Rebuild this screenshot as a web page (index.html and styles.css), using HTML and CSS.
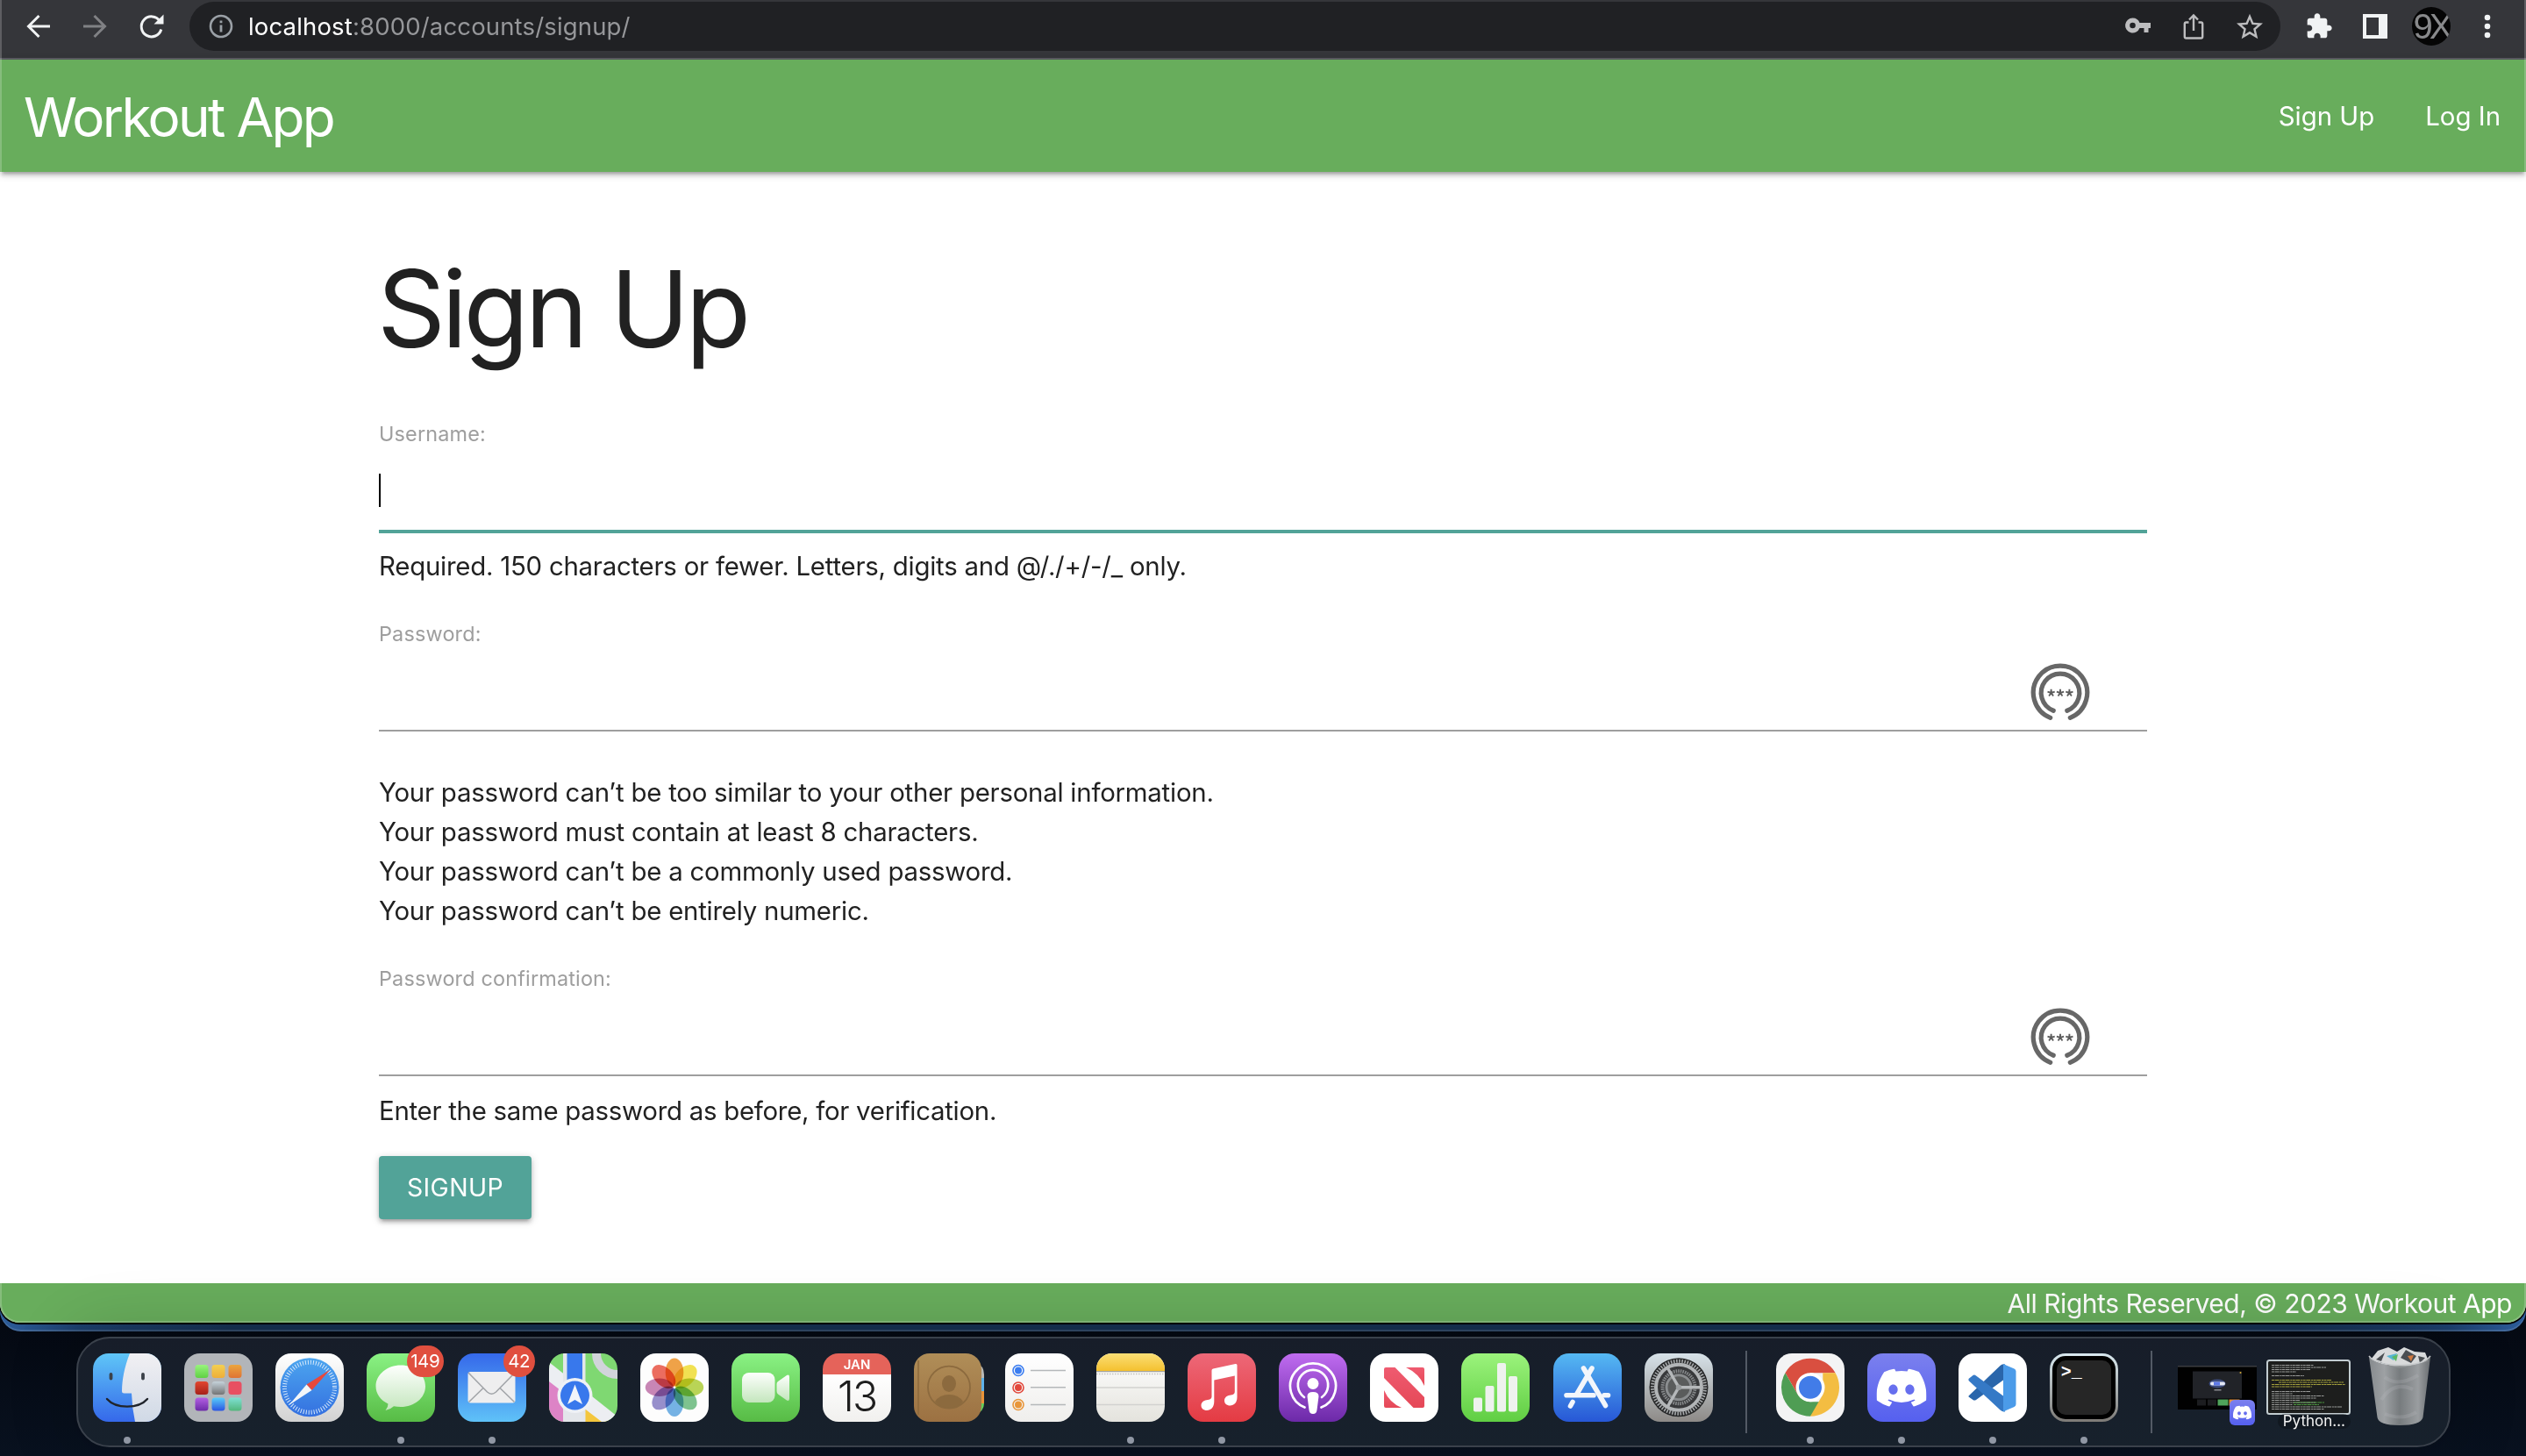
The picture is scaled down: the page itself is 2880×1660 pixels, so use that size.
FILE: index.html
```html
<!DOCTYPE html>
<html lang="en">
<head>
<meta charset="utf-8">
<title>Workout App</title>
<link rel="stylesheet" href="styles.css">
</head>
<body>
<svg class="defs" width="0" height="0">
  <defs>
    <linearGradient id="g-finder" x2="0" y2="1"><stop offset="0" stop-color="#5fc6f7"/><stop offset="1" stop-color="#3568ea"/></linearGradient>
    <linearGradient id="g-face" x2="0" y2="1"><stop offset="0" stop-color="#f1f0f3"/><stop offset="1" stop-color="#d0d9e6"/></linearGradient>
    <linearGradient id="g-silver" x2="0" y2="1"><stop offset="0" stop-color="#fff"/><stop offset="1" stop-color="#d2d2d2"/></linearGradient>
    <linearGradient id="g-safari" x2="0" y2="1"><stop offset="0" stop-color="#4ca5ef"/><stop offset="1" stop-color="#3470e0"/></linearGradient>
    <linearGradient id="g-green" x2="0" y2="1"><stop offset="0" stop-color="#8af284"/><stop offset="1" stop-color="#57bb45"/></linearGradient>
    <linearGradient id="g-bubble" x2="0" y2="1"><stop offset="0" stop-color="#fdfffd"/><stop offset="1" stop-color="#c4e6bd"/></linearGradient>
    <linearGradient id="g-mail" x2="0" y2="1"><stop offset="0" stop-color="#3568ea"/><stop offset="1" stop-color="#5fc2f8"/></linearGradient>
    <linearGradient id="g-brown" x2="0" y2="1"><stop offset="0" stop-color="#b08e58"/><stop offset="1" stop-color="#9c7142"/></linearGradient>
    <linearGradient id="g-paper" x2="0" y2="1"><stop offset="0" stop-color="#fff"/><stop offset="1" stop-color="#efeeec"/></linearGradient>
    <linearGradient id="g-note" x2="0" y2="1"><stop offset="0" stop-color="#fff"/><stop offset="1" stop-color="#e4e3dd"/></linearGradient>
    <linearGradient id="g-yellow" x2="0" y2="1"><stop offset="0" stop-color="#fbdf76"/><stop offset="1" stop-color="#f4c12f"/></linearGradient>
    <linearGradient id="g-music" x2="0" y2="1"><stop offset="0" stop-color="#ed6878"/><stop offset="1" stop-color="#e43b43"/></linearGradient>
    <linearGradient id="g-pod" x2="0" y2="1"><stop offset="0" stop-color="#c06cf0"/><stop offset="1" stop-color="#6c29a8"/></linearGradient>
    <linearGradient id="g-news" x2="0" y2="1"><stop offset="0" stop-color="#ef5b70"/><stop offset="1" stop-color="#e54857"/></linearGradient>
    <linearGradient id="g-numbers" x2="0" y2="1"><stop offset="0" stop-color="#9bf37c"/><stop offset="1" stop-color="#60ce43"/></linearGradient>
    <linearGradient id="g-store" x2="0" y2="1"><stop offset="0" stop-color="#55b9f3"/><stop offset="1" stop-color="#2757d6"/></linearGradient>
    <linearGradient id="g-gear" x2="0" y2="1"><stop offset="0" stop-color="#d7e2e9"/><stop offset="1" stop-color="#8d8a87"/></linearGradient>
    <linearGradient id="g-discord" x2="0" y2="1"><stop offset="0" stop-color="#7b80ee"/><stop offset="1" stop-color="#5560ef"/></linearGradient>
    <linearGradient id="g-lp1" x2="0" y2="1"><stop offset="0" stop-color="#98f57d"/><stop offset="1" stop-color="#5fd044"/></linearGradient>
    <linearGradient id="g-lp2" x2="0" y2="1"><stop offset="0" stop-color="#f3cf50"/><stop offset="1" stop-color="#eeae3a"/></linearGradient>
    <linearGradient id="g-lp3" x2="0" y2="1"><stop offset="0" stop-color="#eba53e"/><stop offset="1" stop-color="#df7334"/></linearGradient>
    <linearGradient id="g-lp4" x2="0" y2="1"><stop offset="0" stop-color="#e2462f"/><stop offset="1" stop-color="#a6221a"/></linearGradient>
    <linearGradient id="g-lp5" x2="0" y2="1"><stop offset="0" stop-color="#c5d2da"/><stop offset="1" stop-color="#737475"/></linearGradient>
    <linearGradient id="g-lp7" x2="0" y2="1"><stop offset="0" stop-color="#b35fe3"/><stop offset="1" stop-color="#6c2ba8"/></linearGradient>
    <linearGradient id="g-lp8" x2="0" y2="1"><stop offset="0" stop-color="#58cdfa"/><stop offset="1" stop-color="#2b55e2"/></linearGradient>
    <linearGradient id="g-lp9" x2="0" y2="1"><stop offset="0" stop-color="#7fe0d3"/><stop offset="1" stop-color="#52b67c"/></linearGradient>
    <linearGradient id="g-trash" x2="1" y2="0"><stop offset="0" stop-color="#8f9396"/><stop offset=".25" stop-color="#a9acae"/><stop offset=".5" stop-color="#7f8385"/><stop offset=".8" stop-color="#a5a8aa"/><stop offset="1" stop-color="#6f7376"/></linearGradient>
    <clipPath id="tile"><rect width="78" height="78" rx="18"/></clipPath>
    <symbol id="discord" viewBox="0 0 127.140 96.360"><path fill="#fff" d="M107.700,8.070A105.150,105.150,0,0,0,81.470,0a72.060,72.060,0,0,0-3.360,6.830A97.680,97.680,0,0,0,49,6.830,72.370,72.370,0,0,0,45.640,0,105.890,105.890,0,0,0,19.390,8.090C2.790,32.650-1.710,56.600.54,80.210h0A105.730,105.730,0,0,0,32.710,96.360,77.700,77.700,0,0,0,39.600,85.250a68.420,68.420,0,0,1-10.850-5.180c.91-.66,1.800-1.340,2.660-2a75.570,75.570,0,0,0,64.320,0c.87.71,1.760,1.390,2.660,2a68.680,68.680,0,0,1-10.870,5.190,77,77,0,0,0,6.890,11.100A105.250,105.250,0,0,0,126.600,80.220h0C129.240,52.840,122.090,29.110,107.700,8.070ZM42.450,65.690C36.180,65.690,31,60,31,53s5-12.740,11.430-12.740S54,46,53.890,53,48.840,65.690,42.450,65.690Zm42.240,0C78.410,65.690,73.250,60,73.250,53s5-12.740,11.440-12.740S96.230,46,96.120,53,91.080,65.690,84.690,65.690Z"/></symbol>
    <symbol id="pwkey" viewBox="-35 -35 70 70"><g fill="none" stroke="#676767" stroke-width="5.200" stroke-linecap="round"><path d="M-11.300 28.300A30.700 30.700 0 1 1 11.300 28.300"/><path d="M-7.800 20.200A21.800 21.800 0 1 1 7.800 20.200"/></g><g stroke="#5c5c5c" stroke-width="1.900"><path id="star" d="M0 0V-4.300M0 0L4.100-1.300M0 0L2.500 3.500M0 0L-2.500 3.500M0 0L-4.100-1.300"/><use href="#star" x="-10.400"/><use href="#star" x="10.400"/></g></symbol>
  </defs>
</svg>
<div class="desktop">
  <div class="window-back">
  <div class="window">
    <div class="toolbar">
      <div class="nav-icons">
        <svg width="28" height="28" viewBox="0 0 28 28"><path d="M27 14H3M14.500 2L2.500 14L14.500 26"/></svg>
        <svg class="disabled" width="28" height="28" viewBox="0 0 28 28"><path d="M1 14H25M13.500 2L25.500 14L13.500 26"/></svg>
        <svg width="30" height="30" viewBox="0 0 30 30"><path d="M24.300 9A11.500 11.500 0 1 0 25.800 18.500"/><path class="tip" d="M28.500 1.500V12.500H17.500Z"/></svg>
      </div>
      <div class="omnibox">
        <svg width="28" height="28" viewBox="0 0 28 28"><circle cx="14" cy="14" r="12" fill="none" stroke="#9aa0a6" stroke-width="2.600"/><path d="M14 12.500V20.500M14 7.500V10.200" stroke="#9aa0a6" stroke-width="2.800"/></svg>
        <div class="url"><span class="host">localhost</span>:8000/accounts/signup/</div>
        <div class="omni-actions">
          <svg width="30" height="30" viewBox="0 0 30 30"><path fill="#bdbdbf" fill-rule="evenodd" d="M9.500 5.500a8.500 8.500 0 0 1 8 5.500H30v6h-2.500v5h-5v-5h-5a8.500 8.500 0 1 1-8-11.500zm0 5.200a3.300 3.300 0 1 0 0 6.600a3.300 3.300 0 0 0 0-6.600z"/></svg>
          <svg width="30" height="30" viewBox="0 0 30 30"><path fill="none" stroke="#bdbdbf" stroke-width="2.400" d="M9.500 10.500H6.500Q4.800 10.500 4.800 12.200V26.800Q4.800 28.500 6.500 28.500H23.500Q25.200 28.500 25.200 26.800V12.200Q25.200 10.500 23.500 10.500H20.500M15 20V2.500M10 7.500L15 2.500L20 7.500"/></svg>
          <svg width="30" height="30" viewBox="0 0 24 24"><path fill="#bdbdbf" d="M22 9.240l-7.190-.62L12 2 9.190 8.630 2 9.240l5.460 4.730L5.820 21 12 17.270 18.180 21l-1.630-7.030L22 9.240zM12 15.400l-3.760 2.270 1-4.280-3.320-2.880 4.380-.38L12 6.100l1.710 4.040 4.380.38-3.320 2.880 1 4.280L12 15.400z" transform="translate(-2.400 -1.800) scale(1.200)"/></svg>
        </div>
      </div>
      <div class="ext-icons">
        <svg width="32" height="32" viewBox="0 0 24 24"><path fill="#f1f3f4" d="M20.500 11H19V7c0-1.100-.9-2-2-2h-4V3.500C13 2.120 11.880 1 10.500 1S8 2.120 8 3.500V5H4c-1.100 0-1.990.9-1.990 2v3.800H3.500c1.490 0 2.700 1.210 2.700 2.700s-1.210 2.700-2.700 2.700H2V20c0 1.100.9 2 2 2h3.800v-1.500c0-1.490 1.210-2.700 2.700-2.700 1.490 0 2.700 1.210 2.700 2.700V22H17c1.100 0 2-.9 2-2v-4h1.500c1.380 0 2.500-1.120 2.500-2.500S21.880 11 20.500 11z"/></svg>
        <svg width="28" height="28" viewBox="0 0 28 28"><path fill="#f1f3f4" fill-rule="evenodd" d="M0 0H28V28H0ZM4 4V24H18V4Z"/></svg>
        <div class="avatar">9X</div>
        <svg width="8" height="28" viewBox="0 0 8 28"><g fill="#f1f3f4"><circle cx="4" cy="4" r="3.300"/><circle cx="4" cy="14" r="3.300"/><circle cx="4" cy="24" r="3.300"/></g></svg>
      </div>
    </div>

    <header class="app-header">
      <div class="brand">Workout App</div>
      <nav class="links"><span>Sign Up</span><span>Log In</span></nav>
    </header>

    <main class="content">
      <h1>Sign Up</h1>
      <label>Username:</label>
      <div class="field focused"><i class="caret"></i></div>
      <p class="help">Required. 150 characters or fewer. Letters, digits and @/./+/-/_ only.</p>
      <label>Password:</label>
      <div class="field"><svg width="70" height="70"><use href="#pwkey"/></svg></div>
      <ul class="rules">
        <li>Your password can’t be too similar to your other personal information.</li>
        <li>Your password must contain at least 8 characters.</li>
        <li>Your password can’t be a commonly used password.</li>
        <li>Your password can’t be entirely numeric.</li>
      </ul>
      <label>Password confirmation:</label>
      <div class="field"><svg width="70" height="70"><use href="#pwkey"/></svg></div>
      <p class="help last">Enter the same password as before, for verification.</p>
      <button class="submit">SIGNUP</button>
    </main>

    <footer class="app-footer">All Rights Reserved, © 2023 Workout App</footer>
  </div>
  </div>

  <div class="dock">
    <div class="app running"><svg viewBox="0 0 78 78"><g clip-path="url(#tile)"><rect width="78" height="78" fill="url(#g-finder)"/><path fill="url(#g-face)" d="M42 0C36 15 33 30 33 43Q33 45.500 35.500 45.500H44Q44.500 62 48 78H78V0Z"/></g><path fill="none" stroke="#20242b" stroke-width="2.400" stroke-linecap="round" d="M16 52C26 63.500 52 63.500 62 52"/><path stroke="#3b4149" stroke-width="3.800" stroke-linecap="round" d="M20.500 24V28.500M57 24V28.500"/></svg></div>
    <div class="app"><svg viewBox="0 0 78 78"><rect width="78" height="78" rx="18" fill="#b2b5b9"/><rect x="12.500" y="13" width="15" height="15" rx="3.500" fill="url(#g-lp1)"/><rect x="31.500" y="13" width="15" height="15" rx="3.500" fill="url(#g-lp2)"/><rect x="50.500" y="13" width="15" height="15" rx="3.500" fill="url(#g-lp3)"/><rect x="12.500" y="32" width="15" height="15" rx="3.500" fill="url(#g-lp4)"/><rect x="31.500" y="32" width="15" height="15" rx="3.500" fill="url(#g-lp5)"/><rect x="50.500" y="32" width="15" height="15" rx="3.500" fill="#e84f62"/><rect x="12.500" y="50.500" width="15" height="15" rx="3.500" fill="url(#g-lp7)"/><rect x="31.500" y="50.500" width="15" height="15" rx="3.500" fill="url(#g-lp8)"/><rect x="50.500" y="50.500" width="15" height="15" rx="3.500" fill="url(#g-lp9)"/></svg></div>
    <div class="app"><svg viewBox="0 0 78 78"><rect width="78" height="78" rx="18" fill="url(#g-silver)"/><circle cx="39" cy="38.700" r="33.500" fill="url(#g-safari)"/><circle cx="39" cy="38.700" r="28.500" fill="none" stroke="#d6e8fa" stroke-width="5" stroke-dasharray="1 2"/><path fill="#e8483c" d="M62.500 18.500L35.500 35.500L41.500 42Z"/><path fill="#f3f6f9" d="M15.500 59L35.500 35.500L41.500 42Z"/></svg></div>
    <div class="app running"><svg viewBox="0 0 78 78"><rect width="78" height="78" rx="18" fill="url(#g-green)"/><path fill="url(#g-bubble)" d="M39 13.500C54.500 13.500 67 24 67 37.500S54.500 61 39 61Q34.500 61 31 60.200Q27 64 21.500 65Q24.500 61.500 24.500 57.500C16 53.500 10.500 46 10.500 37.500C10.500 24 23.500 13.500 39 13.500Z"/></svg><span class="badge b3">149</span></div>
    <div class="app running"><svg viewBox="0 0 78 78"><rect width="78" height="78" rx="18" fill="url(#g-mail)"/><rect x="11.500" y="21" width="54" height="35.500" rx="3" fill="#eeeeef"/><path fill="none" stroke="#a2a5a9" stroke-width="1.600" d="M12.500 55.500L29 39.500M64.500 55.500L48 39.500M12 22L33.500 44Q38.500 48.500 43.500 44L65 22"/></svg><span class="badge b2">42</span></div>
    <div class="app"><svg viewBox="0 0 78 78"><g clip-path="url(#tile)"><rect width="78" height="78" fill="#7fd872"/><path fill="#f4c63d" d="M40 60L70 78H40Z"/><path fill="#dd83c6" d="M0 28L20 45V78H0Z"/><path fill="#eceef2" d="M0 10L78 72V90L60 78L0 32Z"/><path fill="#e3e6ea" d="M16 0H41.500V78H16Z"/><path fill="#3878ec" d="M20.500 0H38V40H20.500Z"/><circle cx="78" cy="0" r="24" fill="none" stroke="#d1d4da" stroke-width="10"/></g><circle cx="29.500" cy="48" r="20" fill="#eef1f6"/><circle cx="29.500" cy="48" r="16.500" fill="#3878ec"/><path fill="#f2f5fa" d="M29.500 35.500L38 58L29.500 53L21 58Z"/></svg></div>
    <div class="app"><svg viewBox="0 0 78 78"><rect width="78" height="78" rx="18" fill="#fdfdfd"/><g class="petals"><ellipse cx="39" cy="21.500" rx="10.300" ry="16" fill="#f09b38"/><ellipse cx="39" cy="21.500" rx="10.300" ry="16" fill="#f2e143" transform="rotate(45 39 38.700)"/><ellipse cx="39" cy="21.500" rx="10.300" ry="16" fill="#b5d348" transform="rotate(90 39 38.700)"/><ellipse cx="39" cy="21.500" rx="10.300" ry="16" fill="#74c087" transform="rotate(135 39 38.700)"/><ellipse cx="39" cy="21.500" rx="10.300" ry="16" fill="#6aaee4" transform="rotate(180 39 38.700)"/><ellipse cx="39" cy="21.500" rx="10.300" ry="16" fill="#8f86c9" transform="rotate(225 39 38.700)"/><ellipse cx="39" cy="21.500" rx="10.300" ry="16" fill="#c67db1" transform="rotate(270 39 38.700)"/><ellipse cx="39" cy="21.500" rx="10.300" ry="16" fill="#ec6253" transform="rotate(315 39 38.700)"/></g></svg></div>
    <div class="app"><svg viewBox="0 0 78 78"><rect width="78" height="78" rx="18" fill="url(#g-green)"/><rect x="12" y="22" width="37.500" height="34" rx="8" fill="url(#g-bubble)"/><path fill="url(#g-bubble)" d="M51.500 35Q51.500 33 53 32L63 25Q66 23.500 66 27V51.500Q66 55 63 53.500L53 46.500Q51.500 45 51.500 43Z"/></svg></div>
    <div class="app calendar"><span class="month">JAN</span><span class="day">13</span></div>
    <div class="app"><svg class="wide" viewBox="0 0 80 78"><path fill="#b9b9b6" d="M70 10Q80 14 80 24V28H70Z"/><path fill="#5eb2ea" d="M70 28H80V43H70Z"/><path fill="#e9943a" d="M70 43H80V57H70Z"/><path fill="#65cf5b" d="M70 57H80Q80 66 70 70Z"/><rect width="77" height="78" rx="18" fill="url(#g-brown)"/><path stroke="#8c6a3c" stroke-width="1.500" d="M5 8V70"/><g fill="#8c6a3e"><ellipse cx="40" cy="34.500" rx="8" ry="9.500"/><path d="M24 55Q29 47 40 47T56 55Q50 63 40 63T24 55Z"/></g><circle cx="40" cy="38.700" r="24" fill="none" stroke="#8c6a3e" stroke-width="1.800"/></svg></div>
    <div class="app"><svg viewBox="0 0 78 78"><rect width="78" height="78" rx="18" fill="url(#g-paper)"/><g fill="none" stroke-width="1.600"><circle cx="15" cy="19.500" r="6" stroke="#3b7df0"/><circle cx="15" cy="39" r="6" stroke="#e2483c"/><circle cx="15" cy="58.500" r="6" stroke="#e8963a"/></g><circle cx="15" cy="19.500" r="4" fill="#3b7df0"/><circle cx="15" cy="39" r="4" fill="#e2483c"/><circle cx="15" cy="58.500" r="4" fill="#e8963a"/><path stroke="#b5b8ba" stroke-width="1.500" d="M29 19.500H69M29 38.700H69M29 58.500H69"/></svg></div>
    <div class="app running"><svg viewBox="0 0 78 78"><g clip-path="url(#tile)"><rect width="78" height="78" fill="url(#g-note)"/><rect width="78" height="20" fill="url(#g-yellow)"/><path stroke="#a5a49d" stroke-width="1.200" d="M0 20.600H78"/><path stroke="#c3c3bf" stroke-width="1.500" stroke-dasharray="1.500 1.500" d="M0 23.500H78"/><path stroke="#d2d2d0" stroke-width="1.500" d="M0 39H78M0 58.500H78"/></g></svg></div>
    <div class="app running"><svg viewBox="0 0 78 78"><rect width="78" height="78" rx="18" fill="url(#g-music)"/><path fill="#fff" d="M27.500 19.500Q27.500 18 29 17.600L54.500 12Q56.500 11.600 56.500 13.500V50C56.500 56 53 59.500 48.500 59.500C44.500 59.500 42 57 42 54C42 50.500 44.500 48.500 48 47.800C52 47 53.800 46.500 53.800 43.500V25.500L30.300 30.500V55C30.300 61.500 26.500 65 22 65C18 65 15.500 62.500 15.500 59.500C15.500 56 18 54 21.500 53.300C25.500 52.500 27.500 52 27.500 49Z"/></svg></div>
    <div class="app"><svg viewBox="0 0 78 78"><rect width="78" height="78" rx="18" fill="url(#g-pod)"/><g fill="none" stroke="#fff" stroke-width="2.700" stroke-linecap="round"><path d="M29.500 61.500A26 26 0 1 1 48.500 61.500"/><path d="M29 50A17.200 17.200 0 1 1 49 50"/></g><circle cx="39" cy="34.500" r="6.500" fill="#fff"/><path fill="#fff" d="M32.500 49Q32.500 44 39 44T45.500 49L43.500 64.500Q43 69 39 69T34.500 64.500Z"/></svg></div>
    <div class="app"><svg viewBox="0 0 78 78"><rect width="78" height="78" rx="18" fill="#fff"/><g fill="url(#g-news)"><path d="M16 18Q16 16 18 16H28.500L62 50V60Q62 62 60 62H49.500L16 28Z"/><path d="M41 16H60Q62 16 62 18V37Q56 23 41 16Z"/><path d="M16 42Q22 56 36 62H18Q16 62 16 60Z"/></g></svg></div>
    <div class="app"><svg viewBox="0 0 78 78"><rect width="78" height="78" rx="18" fill="url(#g-numbers)"/><g fill="#eef2ee"><rect x="14" y="50.500" width="10" height="16" rx="2"/><rect x="27.500" y="37" width="10" height="29.500" rx="2"/><rect x="41" y="11" width="10" height="55.500" rx="2"/><rect x="54" y="26" width="10" height="40.500" rx="2"/></g></svg></div>
    <div class="app"><svg viewBox="0 0 78 78"><rect width="78" height="78" rx="18" fill="url(#g-store)"/><g stroke="#f3f6fb" stroke-width="5.600" stroke-linecap="round"><path d="M34.500 17L59.500 59.500"/><path d="M44 17L27 46"/><path d="M15 47.800H46M58 47.800H62.500M22 55.500L19.500 60"/></g></svg></div>
    <div class="app"><svg viewBox="0 0 78 78"><rect width="78" height="78" rx="18" fill="url(#g-gear)"/><circle cx="39" cy="38.700" r="33.500" fill="#262728"/><circle cx="39" cy="38.700" r="30" fill="none" stroke="#a5a8aa" stroke-width="4" stroke-dasharray="1.600 1.540"/><circle cx="39" cy="38.700" r="26" fill="#38393b" stroke="#b2b5b7" stroke-width="4"/><circle cx="39" cy="38.700" r="18.500" fill="none" stroke="#85888a" stroke-width="4" stroke-dasharray="1.600 1"/><circle cx="39" cy="38.700" r="14" fill="#5a5c5c" stroke="#8a8d8f" stroke-width="3"/><g stroke="#b5b8ba" stroke-width="3.400"><path d="M39 38.700H64M39 38.700L26.500 17M39 38.700L26.500 60.400"/></g><circle cx="39" cy="38.700" r="3.200" fill="#9b9ea0"/></svg></div>
    <i class="sep"></i>
    <div class="app running"><svg viewBox="0 0 78 78"><rect width="78" height="78" rx="18" fill="#f3f3f4"/><path fill="#d94f40" d="M10.400 22.200A33 33 0 0 1 67.600 22.200H39L24.700 47Z"/><path fill="#4f9d54" d="M10.400 22.200L24.700 47Q30 55 39 55.200H53.300L39 71.700A33 33 0 0 1 10.400 22.200Z"/><path fill="#f3bd42" d="M67.600 22.200A33 33 0 0 1 39 71.700L53.300 47V22.200Z"/><circle cx="39" cy="38.700" r="16.500" fill="#fff"/><circle cx="39" cy="38.700" r="13" fill="#427ce8"/></svg></div>
    <div class="app running"><svg viewBox="0 0 78 78"><rect width="78" height="78" rx="18" fill="url(#g-discord)"/><use href="#discord" x="10.500" y="17.500" width="57" height="43.200"/></svg></div>
    <div class="app running"><svg viewBox="0 0 78 78"><rect width="78" height="78" rx="18" fill="#fff"/><path fill="#2a66ab" d="M11.500 48.500L47.500 14Q50 11.500 53 12.500V29L20 53Q18 54 16.500 53L11.500 49.500Z"/><path fill="#3579c6" d="M11.500 29L16.500 25Q18 24 20 25.500L53 50V66.500Q50 67 47.500 64.500L11.500 31Z"/><path fill="#4b9be9" d="M51 12L63.500 17.500Q65.500 18.500 65.500 20.500V58Q65.500 60 63.500 61L51 66.500Z"/></svg></div>
    <div class="app terminal running"><div class="screen">&gt;_</div></div>
    <i class="sep second"></i>
    <div class="thumb video">
      <svg width="90" height="50" viewBox="0 0 90 50"><rect width="90" height="50" fill="#010101"/><rect width="90" height="1.500" fill="#3b3c40"/><rect x="17" y="6.500" width="56" height="31" fill="#212328"/><ellipse cx="45" cy="20.500" rx="9.500" ry="5" fill="#3b4a7c"/><rect x="37" y="18.500" width="17" height="4" rx="2" fill="#e2e6f4"/><rect x="41" y="18.500" width="7" height="4" fill="#5d78e8"/><rect x="41.500" y="27" width="8" height="1.500" fill="#8b8c90"/><rect x="22" y="38.500" width="10" height="7" fill="#1c1d20"/><rect x="34" y="38.500" width="10" height="7" fill="#1c1d20"/><rect x="45.500" y="38.500" width="12" height="7" fill="#4fa35b"/><rect x="58.500" y="38.500" width="12" height="7" fill="#e8953a"/><circle cx="71.500" cy="8" r="1" fill="#d3a531"/></svg>
      <svg class="mini" width="29" height="29" viewBox="0 0 78 78"><rect width="78" height="78" rx="16" fill="url(#g-discord)"/><use href="#discord" x="10.500" y="17.500" width="57" height="43.200"/></svg>
    </div>
    <div class="thumb console">
      <svg width="96" height="63" viewBox="0 0 96 63"><rect x="1" y="1" width="94" height="61" rx="2.500" fill="#1d1e1d" stroke="#c2ccd0" stroke-width="2"/><g fill="none" stroke-width="1.200" stroke-dasharray="3 .6 5 .8 2 .5"><path stroke="#9a9b9a" d="M6 6.500H54M6 9H68M6 11.500H50M6 14H34M6 18.500H43M6 36.500H50M6 39H30M6 41.500H66M6 44H57M6 46.500H38M6 49H56M6 51.500H30M6 54H86M6 56.500H66"/><path stroke="#a5a13c" d="M6 23.500H74M14 26H88M6 28.500H90M6 31H52"/><path stroke="#4f9c43" d="M31 49H66M31 51.500H60"/></g></svg>
      <span class="caption">Python…</span>
    </div>
    <svg class="trash" width="74" height="92" viewBox="0 0 74 92"><path fill="#d8dadb" d="M4 16L12 6L24 2L34 7L42 2L54 7L66 8L70 18L37 26Z"/><path fill="#4a4e52" d="M10 16L20 8L16 18ZM38 14L44 5L56 12L50 20ZM58 12L66 14L60 20Z"/><path fill="#56b5d2" d="M22 12L34 9L30 17Z"/><path fill="#5cb864" d="M28 13L35 10L33 18Z"/><path fill="#cf7940" d="M46 12L53 11L50 18Z"/><path fill="url(#g-trash)" fill-opacity=".92" d="M2 13Q10 23 37 23T72 13L63.500 82Q61 91 37 91T11.500 82Z"/><path fill="none" stroke="#c6c9cb" stroke-width="1.500" d="M2 12Q10 22.500 37 22.500T72 12"/><path fill="none" stroke="#c2c5c6" stroke-opacity=".2" stroke-width="4" d="M20 36Q34 48 58 34M16 62Q30 40 52 50M20 78Q40 86 56 76"/></svg>
  </div>
</div>
</body>
</html>
```
FILE: styles.css
```css
* {
  box-sizing: border-box;
  margin: 0;
  padding: 0;
}

body {
  width: 2880px;
  height: 1660px;
  overflow: hidden;
  font-family: Inter, "Liberation Sans", sans-serif;
  color: #212121;
  background: #060c18;
}

svg {
  display: block;
  flex: none;
}

.defs {
  position: absolute;
}

.desktop {
  display: flex;
  flex-direction: column;
  height: 1660px;
  background: linear-gradient(#040811 1500px, #08111f 1660px);
}

/* browser window, with the edge of another window behind it */
.window-back {
  flex: none;
  height: 1518px;
  border-radius: 0 0 24px 24px;
  background: linear-gradient(90deg, #2d5d9b, #1c3f6c 90px, #163152 260px, #163152 2620px, #1c3f6c 2790px, #2d5d9b);
  box-shadow: inset 0 -2px 0 rgba(255, 255, 255, .12);
}

.window {
  position: relative;
  display: flex;
  flex-direction: column;
  height: 1508px;
  border-radius: 0 0 22px 22px;
  overflow: hidden;
  background: #fff;
  box-shadow: 0 1px 0 1px #000;
}

.window::after {
  content: "";
  position: absolute;
  inset: 0;
  border: 2px solid rgba(255, 255, 255, .2);
  border-top: 0;
  border-radius: 0 0 22px 22px;
}

.toolbar {
  display: flex;
  flex: none;
  height: 68px;
  padding: 2px 0 8px 30px;
  background: #35363a;
  border-bottom: 2px solid #5d5e64;
}

.nav-icons {
  display: flex;
  flex: none;
  align-items: center;
  gap: 36px;
  width: 186px;
}

.nav-icons path {
  fill: none;
  stroke: #f1f3f4;
  stroke-width: 3;
}

.nav-icons .disabled path {
  stroke: #808184;
}

.nav-icons .tip {
  fill: #f1f3f4;
  stroke: none;
}

.omnibox {
  display: flex;
  align-items: center;
  flex: none;
  width: 2384px;
  height: 56px;
  padding: 0 20px 0 22px;
  border-radius: 28px;
  background: #202124;
}

.url {
  flex: 1;
  margin-left: 17px;
  font-size: 27.5px;
  letter-spacing: .16px;
  color: #96979a;
}

.host {
  color: #fff;
}

.omni-actions {
  display: flex;
  gap: 34px;
}

.ext-icons {
  display: flex;
  flex: none;
  align-items: center;
  margin-left: 28px;
}

.avatar {
  width: 44px;
  height: 44px;
  margin: 0 38px 0 28px;
  border-radius: 50%;
  overflow: hidden;
  background: #050505;
  color: #88898b;
  font: 40px/44px "Liberation Sans", sans-serif;
  letter-spacing: -4px;
  text-align: center;
}

.ext-icons svg:nth-child(2) {
  margin-left: 34px;
}

.app-header {
  position: relative;
  display: flex;
  flex: none;
  justify-content: space-between;
  align-items: center;
  height: 128px;
  padding: 2px 29px 0 27px;
  color: #fff;
  background: #68ad5c;
  box-shadow: 0 4px 4px rgba(0, 0, 0, .14), 0 6px 2px -4px rgba(0, 0, 0, .12), 0 2px 10px rgba(0, 0, 0, .2);
}

.brand {
  font-size: 62px;
  letter-spacing: -2.65px;
}

.links {
  display: flex;
  gap: 58px;
  padding-bottom: 2px;
  font-size: 29.4px;
}

.content {
  flex: none;
  height: 1267px;
  padding: 86px 432px 0;
}

h1 {
  margin: 0 0 55px -2px;
  font-size: 121.5px;
  font-weight: 400;
  line-height: 140px;
  letter-spacing: -4.4px;
}

label {
  display: block;
  height: 35px;
  font-size: 23.4px;
  line-height: 36px;
  letter-spacing: .18px;
  color: #9e9e9e;
}

.field {
  display: flex;
  justify-content: flex-end;
  height: 94px;
  padding: 15px 64px 0 0;
  border-bottom: 2px solid #9e9e9e;
}

.field.focused {
  justify-content: flex-start;
  height: 96px;
  padding-top: 28px;
  border-bottom: 4px solid #52a398;
}

.caret {
  width: 2px;
  height: 38px;
  background: #000;
}

.help,
.rules {
  font-size: 29.4px;
  line-height: 45px;
  letter-spacing: -.235px;
  list-style: none;
}

.help {
  margin: 15px 0 37px;
}

.rules {
  margin: 47px 0 37px;
}

.help.last {
  margin: 17px 0 29px;
  letter-spacing: -.27px;
}

.submit {
  display: block;
  width: 174px;
  height: 72px;
  padding-bottom: 1px;
  border: 0;
  border-radius: 4px;
  font-family: inherit;
  font-size: 28.4px;
  letter-spacing: .4px;
  color: #fff;
  background: #52a398;
  box-shadow: 0 4px 4px rgba(0, 0, 0, .14), 0 6px 2px -4px rgba(0, 0, 0, .12), 0 2px 10px rgba(0, 0, 0, .2);
}

.app-footer {
  flex: none;
  height: 45px;
  padding: 1px 16px 0 0;
  font-size: 30px;
  line-height: 45px;
  letter-spacing: -.48px;
  text-align: right;
  color: #fff;
  background: #68ad5c;
}

/* dock */
.dock {
  position: relative;
  display: flex;
  flex: none;
  width: 2707px;
  height: 126px;
  margin: 6px 0 0 87px;
  padding: 17px 0 0 16.5px;
  border: 2px solid #3a414b;
  border-radius: 38px;
  background: linear-gradient(#171d29, #17212c);
  box-shadow: 0 0 70px 10px rgba(0, 0, 0, .16);
}

.app {
  position: relative;
  flex: none;
  width: 78px;
  height: 78px;
  margin-right: 26.07px;
}

.app > svg {
  width: 78px;
  height: 78px;
}

.app > .wide {
  width: 80px;
}

.app.running::after {
  content: "";
  position: absolute;
  left: 35px;
  top: 95px;
  width: 8px;
  height: 8px;
  border-radius: 50%;
  background: #9097a4;
}

.badge {
  position: absolute;
  top: -9px;
  height: 36px;
  border-radius: 18px;
  font-size: 20.5px;
  line-height: 36px;
  letter-spacing: -.4px;
  text-align: center;
  color: #fff;
  background: #e04f3f;
}

.b3 {
  left: 46px;
  width: 42px;
}

.b2 {
  left: 52px;
  width: 36px;
}

.petals ellipse {
  mix-blend-mode: multiply;
  opacity: .92;
}

.calendar {
  display: flex;
  flex-direction: column;
  align-items: center;
  border-radius: 18px;
  background: linear-gradient(#e5635a 24px, #fff 24px, #f1f0ee);
}

.month {
  font-size: 15px;
  font-weight: 600;
  line-height: 26px;
  color: #fff;
}

.day {
  margin-top: -2px;
  font-size: 48px;
  font-weight: 300;
  line-height: 50px;
  letter-spacing: -2px;
  color: #1e1e1e;
}

.sep {
  flex: none;
  width: 2px;
  height: 94px;
  margin: -3px 33px 0 11px;
  background: #535a65;
}

.sep.second {
  margin: -3px 29px 0 11px;
}

.terminal {
  padding: 3px;
  border-radius: 18px;
  background: linear-gradient(#d8e8ef, #7d7a76);
}

.screen {
  height: 72px;
  padding: 2px 0 0 5px;
  border: 5px solid #000;
  border-radius: 15px;
  background: #262626;
  color: #fff;
  font: bold 20px/24px "Liberation Mono", monospace;
}

.thumb {
  position: relative;
  flex: none;
}

.video {
  width: 101px;
  padding-top: 14px;
}

.mini {
  position: absolute;
  left: 59px;
  top: 53px;
}

.console {
  width: 96px;
  padding-top: 7px;
}

.caption {
  position: absolute;
  left: 13px;
  top: 69px;
  width: 83px;
  height: 17px;
  border-radius: 9px;
  font-size: 17px;
  line-height: 17px;
  text-align: center;
  color: #f4f4f4;
  background: rgba(12, 16, 22, .5);
}

.trash {
  margin: -9px 0 0 19px;
}
```
